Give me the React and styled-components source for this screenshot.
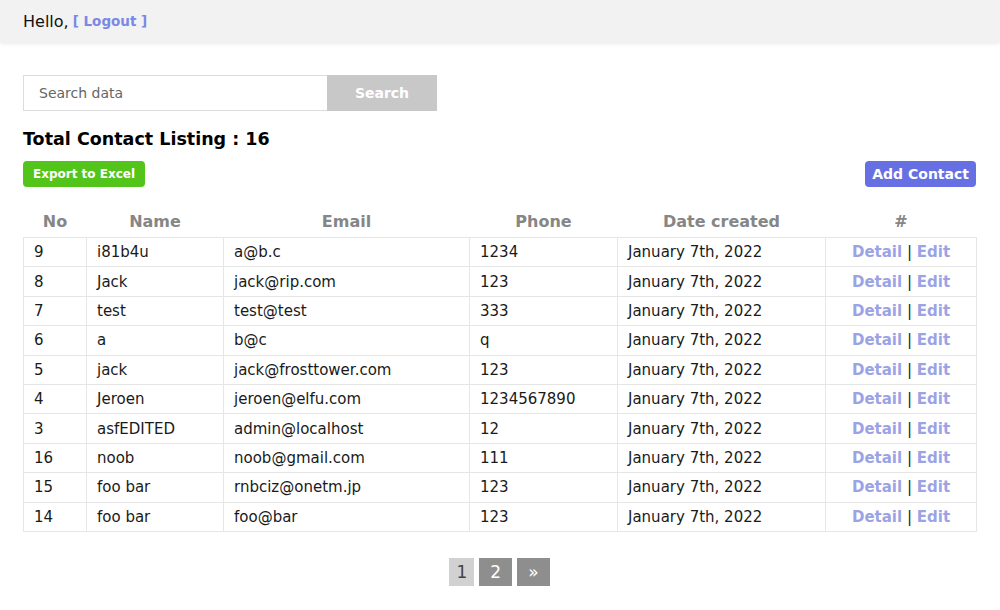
import React from "react";
import styled, { createGlobalStyle } from "styled-components";

const contacts = [
  { no: 9, name: "i81b4u", email: "a@b.c", phone: "1234" },
  { no: 8, name: "Jack", email: "jack@rip.com", phone: "123" },
  { no: 7, name: "test", email: "test@test", phone: "333" },
  { no: 6, name: "a", email: "b@c", phone: "q" },
  { no: 5, name: "jack", email: "jack@frosttower.com", phone: "123" },
  { no: 4, name: "Jeroen", email: "jeroen@elfu.com", phone: "1234567890" },
  { no: 3, name: "asfEDITED", email: "admin@localhost", phone: "12" },
  { no: 16, name: "noob", email: "noob@gmail.com", phone: "111" },
  { no: 15, name: "foo bar", email: "rnbciz@onetm.jp", phone: "123" },
  { no: 14, name: "foo bar", email: "foo@bar", phone: "123" },
];

const App = () => {
  return (
    <>
      <GlobalStyle />
      <Header>
        Hello, <LogoutLink href="#">[ Logout ]</LogoutLink>
      </Header>
      <Main>
        <SearchForm onSubmit={(e) => e.preventDefault()}>
          <SearchInput placeholder="Search data" />
          <SearchButton type="submit">Search</SearchButton>
        </SearchForm>
        <Title>Total Contact Listing : 16</Title>
        <ActionRow>
          <ActionButton $color="#52c41a" $size="12px" $pad="6px 10px">
            Export to Excel
          </ActionButton>
          <ActionButton $color="#6670e2" $size="14px" $pad="5px 7px">
            Add Contact
          </ActionButton>
        </ActionRow>
        <Table>
          <colgroup>
            <col style={{ width: 63 }} />
            <col style={{ width: 137 }} />
            <col style={{ width: 246 }} />
            <col style={{ width: 148 }} />
            <col style={{ width: 208 }} />
            <col style={{ width: 151 }} />
          </colgroup>
          <thead>
            <tr>
              <Th>No</Th>
              <Th>Name</Th>
              <Th>Email</Th>
              <Th>Phone</Th>
              <Th>Date created</Th>
              <Th>#</Th>
            </tr>
          </thead>
          <tbody>
            {contacts.map((c) => (
              <tr key={c.no}>
                <Td>{c.no}</Td>
                <Td>{c.name}</Td>
                <Td>{c.email}</Td>
                <Td>{c.phone}</Td>
                <Td>January 7th, 2022</Td>
                <Td $center>
                  <RowLink href="#">Detail</RowLink> | <RowLink href="#">Edit</RowLink>
                </Td>
              </tr>
            ))}
          </tbody>
        </Table>
        <Pager>
          <PageButton $active>1</PageButton>
          <PageButton>2</PageButton>
          <PageButton>»</PageButton>
        </Pager>
      </Main>
    </>
  );
};

const GlobalStyle = createGlobalStyle`
  body {
    margin: 0;
    background: #ffffff;
    font-family: "DejaVu Sans", "Open Sans", sans-serif;
    color: #111;
  }
`;

const Header = styled.div`
  height: 42px;
  padding: 0 23px;
  display: flex;
  align-items: center;
  gap: 4px;
  background: #f2f2f2;
  box-shadow: 0 2px 4px rgba(0, 0, 0, 0.08);
  font-size: 16px;
  color: #111;
`;

const LogoutLink = styled.a`
  color: #7b88e6;
  font-weight: bold;
  font-size: 13.5px;
  text-decoration: none;
`;

const Main = styled.div`
  padding: 33px 24px 0 23px;
`;

const SearchForm = styled.form`
  display: flex;
  width: 414px;
  height: 36px;
`;

const SearchInput = styled.input`
  flex: 1;
  border: 1px solid #dcdcdc;
  border-right: none;
  padding: 0 15px;
  font-family: inherit;
  font-size: 14px;
  color: #333;
  outline: none;
  &::placeholder {
    color: #666;
  }
`;

const SearchButton = styled.button`
  width: 110px;
  border: none;
  background: #c8c8c8;
  color: #fff;
  font-family: inherit;
  font-weight: bold;
  font-size: 14px;
`;

const Title = styled.h2`
  margin: 18px 0 12px;
  font-size: 17.5px;
  font-weight: bold;
  color: #000;
`;

const ActionRow = styled.div`
  display: flex;
  justify-content: space-between;
  align-items: center;
`;

const ActionButton = styled.button`
  border: none;
  border-radius: 4px;
  background: ${(p) => p.$color};
  color: #fff;
  font-family: inherit;
  font-weight: bold;
  font-size: ${(p) => p.$size};
  padding: ${(p) => p.$pad};
`;

const Table = styled.table`
  margin-top: 20px;
  width: 100%;
  border-collapse: collapse;
  table-layout: fixed;
`;

const Th = styled.th`
  padding: 5px 10px 6px;
  font-size: 16px;
  color: #868686;
  text-align: center;
`;

const Td = styled.td`
  height: 28.4px;
  padding: 0 10px;
  border: 1px solid #e6e6e6;
  font-size: 15px;
  color: #1a1a1a;
  text-align: ${(p) => (p.$center ? "center" : "left")};
`;

const RowLink = styled.a`
  color: #9ba3e6;
  font-weight: bold;
  text-decoration: none;
`;

const Pager = styled.div`
  margin-top: 26px;
  display: flex;
  justify-content: center;
  gap: 5px;
`;

const PageButton = styled.button`
  height: 28px;
  padding: ${(p) => (p.$active ? "0 7px" : "0 11px")};
  border: none;
  background: ${(p) => (p.$active ? "#d1d1d1" : "#8e8e8e")};
  color: ${(p) => (p.$active ? "#444" : "#fff")};
  font-family: inherit;
  font-size: 17px;
`;

export default App;
